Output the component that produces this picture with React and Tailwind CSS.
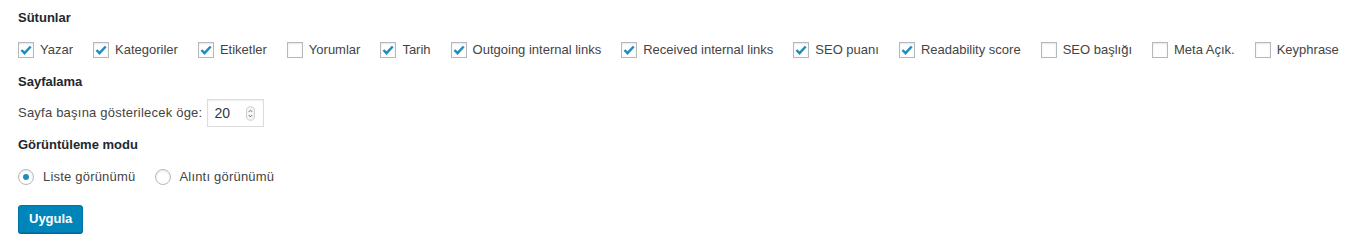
import { useState } from "react";

const columns = [
  { label: "Yazar", on: true },
  { label: "Kategoriler", on: true },
  { label: "Etiketler", on: true },
  { label: "Yorumlar", on: false },
  { label: "Tarih", on: true },
  { label: "Outgoing internal links", on: true },
  { label: "Received internal links", on: true },
  { label: "SEO puanı", on: true },
  { label: "Readability score", on: true },
  { label: "SEO başlığı", on: false },
  { label: "Meta Açık.", on: false },
  { label: "Keyphrase", on: false },
];

function Check({ on }) {
  return (
    <span className="flex h-4 w-4 shrink-0 items-center justify-center border border-[#b4b9be] bg-white shadow-[inset_0_1px_2px_rgba(0,0,0,0.1)]">
      {on && (
        <svg viewBox="0 0 16 16" className="h-[16px] w-[16px]">
          <path d="M2.8 8 L6.3 11.6 L13.4 4" fill="none" stroke="#1e8cbe" strokeWidth="2.8" />
        </svg>
      )}
    </span>
  );
}

function Radio({ on }) {
  return (
    <span className="flex h-4 w-4 shrink-0 items-center justify-center rounded-full border border-[#b4b9be] bg-white shadow-[inset_0_1px_2px_rgba(0,0,0,0.1)]">
      {on && <span className="h-[6px] w-[6px] rounded-full bg-[#1e8cbe]" />}
    </span>
  );
}

export default function App() {
  const [cols, setCols] = useState(columns);
  const [mode, setMode] = useState("list");

  return (
    <div className="h-[248px] w-[1368px] bg-white px-[18px] pt-[8px] text-[13px] text-[#444] font-['Liberation_Sans',Arial,sans-serif]">
      <div className="flex h-5 items-center font-bold text-[#23282d]">Sütunlar</div>

      <div className="mt-[6px] flex h-8 items-center gap-[20px]">
        {cols.map((c, i) => (
          <label
            key={c.label}
            className="flex cursor-pointer items-center gap-[6px] whitespace-nowrap"
            onClick={() =>
              setCols(cols.map((x, j) => (j === i ? { ...x, on: !x.on } : x)))
            }
          >
            <Check on={c.on} />
            <span>{c.label}</span>
          </label>
        ))}
      </div>

      <div className="mt-[6px] flex h-5 items-center font-bold text-[#23282d]">Sayfalama</div>

      <div className="mt-[7px] flex h-7 items-center">
        <span className="tracking-[0.22px]">Sayfa başına gösterilecek öge:</span>
        <div className="ml-[5px] flex h-7 w-[57px] items-center justify-between border border-[#ddd] bg-white pl-[6px] pr-[8px] text-[#32373c] shadow-[inset_0_1px_2px_rgba(0,0,0,0.07)]">
          <span className="text-[14px]">20</span>
          <svg viewBox="0 0 10 16" className="h-[15px] w-[9px]">
            <rect x="0.5" y="0.5" width="9" height="15" rx="4.5" fill="#f5f5f5" stroke="#c8c8c8" />
            <path d="M3 6.3 L5 4.3 L7 6.3" fill="none" stroke="#666" strokeWidth="1" />
            <path d="M3 9.7 L5 11.7 L7 9.7" fill="none" stroke="#666" strokeWidth="1" />
          </svg>
        </div>
      </div>

      <div className="mt-[8px] flex h-5 items-center font-bold text-[#23282d]">Görüntüleme modu</div>

      <div className="mt-3 flex h-5 items-center gap-[20px]">
        <label className="flex cursor-pointer items-center gap-[9px]" onClick={() => setMode("list")}>
          <Radio on={mode === "list"} />
          <span className="tracking-[0.2px]">Liste görünümü</span>
        </label>
        <label className="flex cursor-pointer items-center gap-[8px]" onClick={() => setMode("excerpt")}>
          <Radio on={mode === "excerpt"} />
          <span className="tracking-[0.2px]">Alıntı görünümü</span>
        </label>
      </div>

      <button className="mt-[18px] flex h-7 items-center rounded-[3px] border border-[#0073aa] bg-[#0085ba] px-[10px] font-bold text-white shadow-[0_1px_0_#006799]">
        Uygula
      </button>
    </div>
  );
}
